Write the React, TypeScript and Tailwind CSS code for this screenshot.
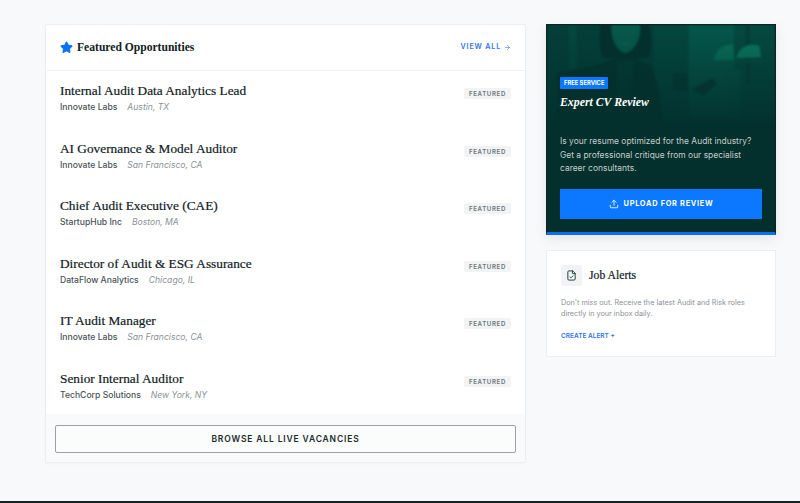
import { ArrowRight, FileCheck, Star, Upload } from "lucide-react";

const jobs = [
  { title: "Internal Audit Data Analytics Lead", company: "Innovate Labs", place: "Austin, TX" },
  { title: "AI Governance & Model Auditor", company: "Innovate Labs", place: "San Francisco, CA" },
  { title: "Chief Audit Executive (CAE)", company: "StartupHub Inc", place: "Boston, MA" },
  { title: "Director of Audit & ESG Assurance", company: "DataFlow Analytics", place: "Chicago, IL" },
  { title: "IT Audit Manager", company: "Innovate Labs", place: "San Francisco, CA" },
  { title: "Senior Internal Auditor", company: "TechCorp Solutions", place: "New York, NY" },
];

function JobRow({ title, company, place }: { title: string; company: string; place: string }) {
  return (
    <div className="h-[57.5px] flex items-start justify-between px-[14px] pt-[11px]">
      <div>
        <h3 className="font-['Liberation_Serif',serif] text-[13.3px] leading-[18px] text-[#10201e] [-webkit-text-stroke:0.2px_#10201e]">
          {title}
        </h3>
        <div className="flex gap-[10px] text-[8.6px] leading-[14px]">
          <span className="font-medium text-[#4a5358]">{company}</span>
          <span className="italic text-[#8b9298]">{place}</span>
        </div>
      </div>
      <span className="mt-[6px] h-[11px] px-[5px] bg-[#f1f3f5] rounded-[2px] text-[6.1px] leading-[11px] font-semibold tracking-[0.65px] text-[#6e757b]">
        FEATURED
      </span>
    </div>
  );
}

function HeroPicture() {
  return (
    <svg className="absolute inset-0 w-full h-full blur-[1.2px]" viewBox="0 0 230 211" preserveAspectRatio="none" aria-hidden="true">
      <defs>
        <linearGradient id="fade" x1="0" y1="0" x2="0" y2="1">
          <stop offset="0" stopColor="#032f2d" stopOpacity="0" />
          <stop offset="1" stopColor="#032f2d" stopOpacity="1" />
        </linearGradient>
      </defs>
      <rect width="230" height="112" fill="#043f39" />
      <rect x="22" y="0" width="8" height="50" fill="#054840" />
      <rect x="108" y="0" width="40" height="90" fill="#04473f" />
      <rect x="143" y="0" width="46" height="95" fill="#05574b" />
      <rect x="189" y="0" width="41" height="95" fill="#044a41" />
      <rect x="200" y="0" width="5" height="60" fill="#033f38" />
      <path d="M54 0 C52 14 53 27 57 34 L102 34 C106 26 106 12 103 0 Z" fill="#03302d" />
      <path d="M65 0 L94 0 C95 12 90 26 79 29 C69 26 64 12 65 0 Z" fill="#085a4c" />
      <path d="M71 17 Q79 24 88 17 Q80 21 71 17 Z" fill="#0d7561" />
      <path d="M10 48 L48 42 L70 34 L88 34 L106 42 L114 70 L116 112 L10 112 Z" fill="#03322e" />
      <path d="M70 36 L88 36 L84 75 L72 75 Z" fill="#043a35" />
      <path d="M168 36 C170 25 177 20 188 20 L189 36 Z" fill="#09735a" />
      <path d="M191 34 C193 24 201 18 214 21 L216 33 Z" fill="#0a7c60" />
      <rect x="176" y="36" width="44" height="2" fill="#075448" />
      <rect x="181" y="45" width="14" height="50" fill="#055449" />
      <path d="M127 49 L141 49 L143 68 L127 66 Z" fill="#043a35" />
      <path d="M145 66 L167 54 L172 60 L158 72 Z" fill="#043a35" />
      <rect width="230" height="112" fill="url(#fade)" />
      <rect y="112" width="230" height="99" fill="#032f2d" />
    </svg>
  );
}

export default function App() {
  return (
    <div className="h-[503px] overflow-hidden flex flex-col bg-[#f7f9fb] font-['Inter',sans-serif]">
      <main className="flex-1 flex items-start gap-5 pl-[45px] pt-[24px]">
        <section className="w-[481px] h-[439px] flex flex-col bg-white border border-[#eceff1] rounded-[2px] shadow-[0_1px_2px_rgba(0,0,0,0.03)]">
          <header className="h-[46px] shrink-0 flex items-center justify-between px-[14px] border-b border-[#f0f2f4]">
            <div className="flex items-center gap-[4px]">
              <Star size={13} className="text-[#0b72f5] fill-[#0b72f5]" />
              <h2 className="font-['Liberation_Serif',serif] text-[11.6px] font-bold text-[#10201e]">Featured Opportunities</h2>
            </div>
            <a className="flex items-center gap-[3px] text-[7.1px] font-semibold tracking-[0.85px] text-[#2f74e8]">
              VIEW ALL <ArrowRight size={7} strokeWidth={2} />
            </a>
          </header>
          <div className="flex-1 min-h-0">
            {jobs.map((job) => (
              <JobRow key={job.title} {...job} />
            ))}
          </div>
          <div className="h-[48px] shrink-0 px-[9px] pt-[10px] bg-[#f8fafb]">
            <button className="w-full h-[28px] border border-[#9aa0a4] rounded-[2px] bg-white/40 text-[8.5px] font-semibold tracking-[0.85px] text-[#1b2a2b]">
              BROWSE ALL LIVE VACANCIES
            </button>
          </div>
        </section>

        <aside className="w-[230px] flex flex-col gap-[15px]">
          <section className="relative h-[211px] overflow-hidden bg-[#032f2d] border border-[#0d2422] border-b-[3px] border-b-[#0b6ff0] shadow-[0_4px_12px_rgba(0,0,0,0.08)]">
            <HeroPicture />
            <div className="relative flex flex-col items-start h-full px-[13px] pt-[52px]">
              <span className="h-[12px] px-[4px] bg-[#0b78ff] rounded-[1px] text-[5.8px] leading-[12px] font-bold text-white">FREE SERVICE</span>
              <h2 className="mt-[4px] font-['Liberation_Serif',serif] italic font-bold text-[11.8px] leading-[18px] text-white">Expert CV Review</h2>
              <p className="mt-[24px] w-[196px] text-[8.45px] leading-[13.5px] text-[#c5cdcc]">
                Is your resume optimized for the Audit industry? Get a professional critique from our specialist career consultants.
              </p>
              <button className="mt-[13px] w-[202px] h-[30px] shrink-0 flex items-center justify-center gap-[5px] bg-[#0b78ff] text-[7.4px] font-bold tracking-[0.7px] text-white">
                <Upload size={10} strokeWidth={2} />
                UPLOAD FOR REVIEW
              </button>
            </div>
          </section>

          <section className="h-[107px] bg-white border border-[#eceff1] pl-[14px] pt-[14px]">
            <div className="flex items-center gap-[7px]">
              <div className="w-[21px] h-[21px] flex items-center justify-center bg-[#f1f3f5] rounded-[2px]">
                <FileCheck size={11} className="text-[#163331]" />
              </div>
              <h3 className="font-['Liberation_Serif',serif] text-[11.7px] text-[#10201e] [-webkit-text-stroke:0.2px_#10201e]">Job Alerts</h3>
            </div>
            <p className="mt-[11px] w-[200px] text-[7.25px] leading-[11px] text-[#8b9298]">
              Don't miss out. Receive the latest Audit and Risk roles directly in your inbox daily.
            </p>
            <a className="block mt-[12px] text-[6.5px] leading-[10px] font-semibold text-[#2f74e8]">CREATE ALERT +</a>
          </section>
        </aside>
      </main>
      <footer className="h-[2px] shrink-0 bg-[#0d2422]" />
    </div>
  );
}
